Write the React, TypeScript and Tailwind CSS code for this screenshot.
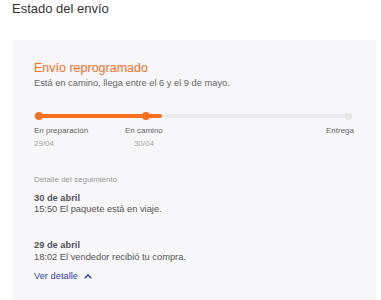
import React from "react";

const Dot = ({ left, color }: { left: string; color: string }) => (
  <span className={`absolute top-[2px] h-[8px] w-[8px] rounded-full ${left} ${color}`} />
);

export default function App() {
  return (
    <div className="w-[381px] h-[300px] overflow-hidden bg-white font-['Liberation_Sans',Arial,sans-serif]">
      <h1 className="pl-3 text-[13px] leading-[18px] text-[#333]">Estado del envío</h1>

      <div className="ml-3 mt-[22px] w-[364px] h-[300px] bg-[#f7f7f9] pl-[22px] pt-[20px]">
        <p className="text-[12.5px] leading-[16px] text-[#f7701f]">Envío reprogramado</p>
        <p className="mt-[1px] text-[9.3px] leading-[12px] text-[#666]">
          Está en camino, llega entre el 6 y el 9 de mayo.
        </p>

        {/* progress track */}
        <div className="relative mt-[21px] h-[12px] w-[320px]">
          <span className="absolute left-[1px] top-[4px] h-[4px] w-[317px] rounded-full bg-[#ebebed]" />
          <span className="absolute left-[311px] top-[2.5px] h-[7px] w-[7px] rounded-[2px] bg-[#e6e6e8]" />
          <span className="absolute left-[1px] top-[4px] h-[4px] w-[127px] rounded-full bg-[#f7701f]" />
          <Dot left="left-[1px]" color="bg-[#f7701f]" />
          <Dot left="left-[108px]" color="bg-[#f7701f]" />
        </div>

        <div className="mt-[4px] flex w-[320px] text-[8px] leading-[10px]">
          <div className="w-[91px]">
            <p className="text-[#666]">En preparación</p>
            <p className="mt-[3px] text-[#a5a5a5]">29/04</p>
          </div>
          <div className="text-center">
            <p className="text-[#666]">En camino</p>
            <p className="mt-[3px] text-[#a5a5a5]">30/04</p>
          </div>
          <div className="ml-auto">
            <p className="text-[#666]">Entrega</p>
          </div>
        </div>

        <p className="mt-[26px] text-[8px] leading-[10px] text-[#9a9a9a]">Detalle del seguimiento</p>

        <div className="mt-[8px] text-[9.3px] leading-[11px]">
          <p className="font-bold text-[#555]">30 de abril</p>
          <p className="text-[#555]">15:50 El paquete está en viaje.</p>
        </div>

        <div className="mt-[25px] text-[9.3px] leading-[11px]">
          <p className="font-bold text-[#555]">29 de abril</p>
          <p className="mt-[1px] text-[#555]">18:02 El vendedor recibió tu compra.</p>
        </div>

        <button className="mt-[8px] flex items-center gap-[6px] text-[9.3px] leading-[11px] text-[#3447b8]">
          Ver detalle
          <svg width="8" height="5" viewBox="0 0 8 5" fill="none">
            <path d="M0.8 4.2 L4 1 L7.2 4.2" stroke="#3447b8" strokeWidth="1.6" />
          </svg>
        </button>
      </div>
    </div>
  );
}
